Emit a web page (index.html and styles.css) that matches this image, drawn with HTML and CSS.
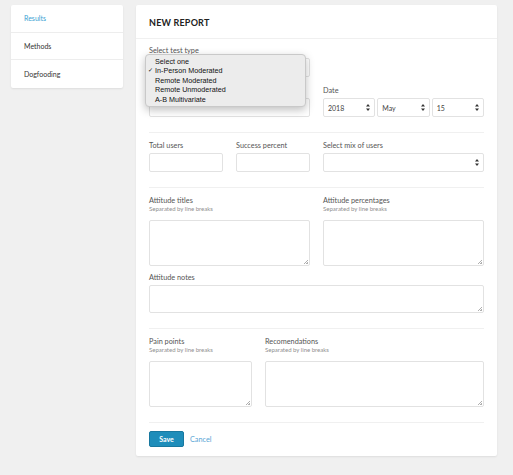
FILE: index.html
```html
<!DOCTYPE html>
<html lang="en">
<head>
  <meta charset="UTF-8" />
  <title>New report</title>
  <link rel="stylesheet" href="styles.css">
</head>
<body>
  <div class="page">
    <!-- Menu laterale -->
    <nav class="side-nav">
      <a class="nav-item active">Results</a>
      <a class="nav-item">Methods</a>
      <a class="nav-item">Dogfooding</a>
    </nav>

    <!-- Scheda principale -->
    <section class="card">
      <div class="card-header">NEW REPORT</div>
      <form class="card-body">
        <div class="grid-2">
          <div class="field">
            <div class="label">Select test type</div>
            <div class="select">
              <span></span>
              <svg class="arrows" width="4" height="7" viewBox="0 0 4 7"><path d="M2 0 L4 2.6 L0 2.6 Z M2 7 L4 4.4 L0 4.4 Z" fill="#333"/></svg>
            </div>
            <!-- menu aperto del select -->
            <ul class="dropdown">
              <li>Select one</li>
              <li class="checked">In-Person Moderated</li>
              <li>Remote Moderated</li>
              <li>Remote Unmoderated</li>
              <li>A-B Multivariate</li>
            </ul>
          </div>
          <div></div>
          <div class="field">
            <div class="label">&nbsp;</div>
            <input class="input" type="text">
          </div>
          <div class="field">
            <div class="label">Date</div>
            <div class="date-row">
              <div class="select"><span>2018</span><svg class="arrows" width="4" height="7" viewBox="0 0 4 7"><path d="M2 0 L4 2.6 L0 2.6 Z M2 7 L4 4.4 L0 4.4 Z" fill="#333"/></svg></div>
              <div class="select"><span>May</span><svg class="arrows" width="4" height="7" viewBox="0 0 4 7"><path d="M2 0 L4 2.6 L0 2.6 Z M2 7 L4 4.4 L0 4.4 Z" fill="#333"/></svg></div>
              <div class="select"><span>15</span><svg class="arrows" width="4" height="7" viewBox="0 0 4 7"><path d="M2 0 L4 2.6 L0 2.6 Z M2 7 L4 4.4 L0 4.4 Z" fill="#333"/></svg></div>
            </div>
          </div>
        </div>

        <hr class="sep">

        <div class="grid-4">
          <div class="field">
            <div class="label">Total users</div>
            <input class="input" type="text">
          </div>
          <div class="field">
            <div class="label">Success percent</div>
            <input class="input" type="text">
          </div>
          <div class="field span-2">
            <div class="label">Select mix of users</div>
            <div class="select"><span></span><svg class="arrows" width="4" height="7" viewBox="0 0 4 7"><path d="M2 0 L4 2.6 L0 2.6 Z M2 7 L4 4.4 L0 4.4 Z" fill="#333"/></svg></div>
          </div>
        </div>

        <hr class="sep">

        <div class="grid-2">
          <div class="field">
            <div class="label tight">Attitude titles</div>
            <div class="hint">Separated by line breaks</div>
            <div class="ta-wrap"><textarea class="textarea tall"></textarea></div>
          </div>
          <div class="field">
            <div class="label tight">Attitude percentages</div>
            <div class="hint">Separated by line breaks</div>
            <div class="ta-wrap"><textarea class="textarea tall"></textarea></div>
          </div>
        </div>
        <div class="field notes">
          <div class="label">Attitude notes</div>
          <div class="ta-wrap"><textarea class="textarea short"></textarea></div>
        </div>

        <hr class="sep">

        <div class="grid-3">
          <div class="field">
            <div class="label tight">Pain points</div>
            <div class="hint">Separated by line breaks</div>
            <div class="ta-wrap"><textarea class="textarea tall"></textarea></div>
          </div>
          <div class="field span-2">
            <div class="label tight">Recomendations</div>
            <div class="hint">Separated by line breaks</div>
            <div class="ta-wrap"><textarea class="textarea tall"></textarea></div>
          </div>
        </div>

        <hr class="sep">

        <div class="actions">
          <button type="button" class="btn-save">Save</button>
          <a class="cancel">Cancel</a>
        </div>
      </form>
    </section>
  </div>
</body>
</html>
```

FILE: styles.css
```css
/* ---------- RESET ---------- */
* {
  margin: 0;
  padding: 0;
  box-sizing: border-box;
}
body {
  font-family: Lato, "Open Sans", sans-serif;
  background: #f0f0f0;
  color: #333;
}
.page {
  display: flex;
  align-items: flex-start;
  gap: 13px;
  padding: 5px 11px;
}

/* ---------- MENU LATERALE ---------- */
.side-nav {
  width: 112px;
  background: #fff;
  box-shadow: 0 1px 2px rgba(0,0,0,0.08);
  border-radius: 2px;
}
.nav-item {
  display: flex;
  align-items: center;
  height: 27.7px;
  padding-left: 13px;
  font-size: 7px;
  color: #333;
  border-bottom: 1px solid #ededed;
}
.nav-item:last-child {
  border-bottom: none;
}
.nav-item.active {
  color: #3a9fd3;
}

/* ---------- SCHEDA ---------- */
.card {
  width: 361px;
  background: #fff;
  box-shadow: 0 1px 2px rgba(0,0,0,0.08);
  border-radius: 2px;
}
.card-header {
  height: 34px;
  display: flex;
  align-items: center;
  padding: 1px 13px 0;
  font-size: 9px;
  font-weight: bold;
  color: #222;
  letter-spacing: 0.2px;
  border-bottom: 1px solid #f0f0f0;
}
.card-body {
  padding: 7px 13px 9px;
}

/* ---------- GRIGLIE ---------- */
.grid-2 {
  display: grid;
  grid-template-columns: 1fr 1fr;
  column-gap: 13px;
  row-gap: 9px;
}
.grid-3 {
  display: grid;
  grid-template-columns: repeat(3, 1fr);
  column-gap: 13px;
}
.grid-4 {
  display: grid;
  grid-template-columns: repeat(4, 1fr);
  column-gap: 13px;
}
.span-2 {
  grid-column: span 2;
}
.field {
  position: relative;
  display: flex;
  flex-direction: column;
}
.notes {
  margin-top: 7px;
}
.sep {
  border: none;
  border-top: 1px solid #f0f0f0;
  margin: 15px 0 8px;
}

/* ---------- ETICHETTE ---------- */
.label {
  font-size: 7.3px;
  line-height: 10px;
  margin-bottom: 2px;
  color: #555;
}
.label.tight {
  line-height: 9px;
  margin-bottom: 0;
}
.hint {
  font-size: 6px;
  line-height: 8px;
  color: #8f8f8f;
  margin-bottom: 7px;
}

/* ---------- CAMPI ---------- */
.input,
.textarea,
.select {
  width: 100%;
  border: 1px solid #e2e2e2;
  border-radius: 2px;
  background: #fff;
  font-family: inherit;
  outline: none;
}
.input {
  height: 19px;
}
.select {
  height: 19px;
  display: flex;
  align-items: center;
  justify-content: space-between;
  padding: 0 4px;
  font-size: 7px;
  color: #444;
}
.arrows {
  flex: none;
}
.ta-wrap {
  position: relative;
}
/* piccola maniglia di ridimensionamento */
.ta-wrap::after {
  content: "";
  position: absolute;
  right: 2px;
  bottom: 2px;
  width: 4px;
  height: 4px;
  background: linear-gradient(135deg, transparent 0 45%, #b0b0b0 45% 58%, transparent 58% 75%, #b0b0b0 75% 88%, transparent 88%);
}
.textarea {
  display: block;
  resize: none;
}
.textarea.tall {
  height: 46px;
}
.textarea.short {
  height: 28px;
}
.date-row {
  display: grid;
  grid-template-columns: 1fr 1fr 1fr;
  gap: 2px;
}

/* ---------- MENU A TENDINA ---------- */
.dropdown {
  position: absolute;
  left: -4px;
  top: 8px;
  width: 161px;
  list-style: none;
  padding: 2px 0;
  background: #ececec;
  border: 1px solid #c9c9c9;
  border-radius: 4px;
  box-shadow: 0 3px 8px rgba(0,0,0,0.25);
  font-family: "Liberation Sans", Arial, sans-serif;
  font-size: 7.2px;
  color: #111;
  z-index: 5;
}
.dropdown li {
  position: relative;
  line-height: 9.4px;
  padding-left: 9px;
}
.dropdown li.checked::before {
  content: "\2713";
  position: absolute;
  left: 2px;
  font-size: 6px;
}

/* ---------- AZIONI ---------- */
.actions {
  display: flex;
  align-items: center;
  gap: 6px;
}
.btn-save {
  width: 35px;
  height: 16px;
  background: #1e8dba;
  border: 1px solid #18789f;
  border-radius: 2px;
  color: #fff;
  font-family: inherit;
  font-size: 7px;
  font-weight: bold;
}
.cancel {
  font-size: 7.3px;
  color: #5aa6d6;
}
```
